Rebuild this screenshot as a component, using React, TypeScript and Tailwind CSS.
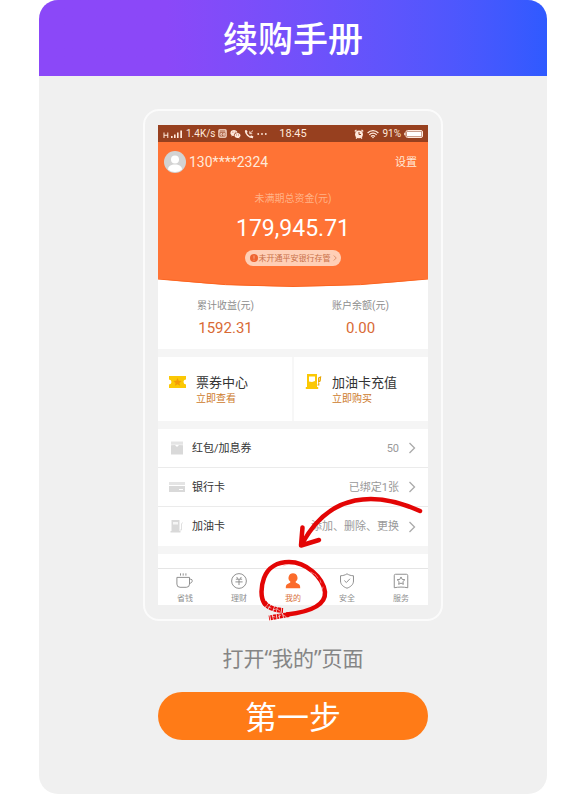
import type { ReactNode } from "react";

const cjk = "font-['Roboto','Noto_Sans_CJK_SC',sans-serif]";

function Chevron({ className }: { className: string }) {
  return (
    <svg viewBox="0 0 8 12" className={className} fill="none" stroke="currentColor" strokeWidth="1.3">
      <path d="M1.5 1 6.5 6 1.5 11" />
    </svg>
  );
}

function StatusBar() {
  return (
    <div className="flex h-[17px] items-center justify-between bg-[#97401f] px-[5px] text-[10px] leading-none text-[#ffe9dc]">
      <div className="flex flex-1 items-center gap-[3px]">
        <svg viewBox="0 0 20 10" className="h-[10px] w-5" fill="currentColor">
          <path d="M.5 3.5h1v2.2h2.800V3.500h1V9h-1V6.700H1.500V9h-1z" />
          <path d="M8 7h1.600v2H8zM11 5.500h1.600V9H11zM14 3.500h1.600V9H14zM17.300 1.500h1.700V9h-1.700z" />
        </svg>
        <span>1.4K/s</span>
        <svg viewBox="0 0 10 10" className="size-[9px]" fill="none" stroke="currentColor" strokeWidth="1.3">
          <rect x="1" y="1" width="8" height="8" rx="1" />
          <path d="M1 3.200h8M3 5h1.500v2H3zM6 5h1.500v2H6z" strokeWidth=".9" />
        </svg>
        <svg viewBox="0 0 11 10" className="h-[10px] w-[11px]" fill="currentColor">
          <path d="M4 1C1.900 1 .4 2.300.4 4c0 1 .5 1.800 1.300 2.300L1.400 7.500l1.300-.7 1.200.2C3.500 4.800 5 3.400 7.500 3.400 7.100 1.900 5.700 1 4 1z" />
          <path d="M7.500 4C5.800 4 4.500 5.100 4.500 6.500S5.800 9 7.500 9l.9-.1 1.100.6-.3-1c.8-.5 1.300-1.200 1.300-2C10.500 5.100 9.200 4 7.500 4z" />
          <path d="M2.500 3.200h.8M4.900 3.200h.8M6 6h.8M8.200 6H9" stroke="#97401f" strokeWidth=".8" />
        </svg>
        <svg viewBox="0 0 10 10" className="size-[10px]" fill="none" stroke="currentColor">
          <path d="M1.800 1.500C1.200 4.500 5 8.800 8.500 8.300" strokeWidth="1.500" />
          <path d="M1.500 1.500 3 3.500M6.500 7.200 9 8.500" strokeWidth="2" />
          <path d="M9 1.500 5.800 4.500M5.800 2.200v2.500h2.500" strokeWidth=".9" />
        </svg>
        <svg viewBox="0 0 10 4" className="h-1 w-[10px]" fill="currentColor">
          <circle cx="1.200" cy="2" r=".9" />
          <circle cx="5" cy="2" r=".9" />
          <circle cx="8.800" cy="2" r=".9" />
        </svg>
      </div>
      <span className="text-[11px]">18:45</span>
      <div className="flex flex-1 items-center justify-end gap-[3px]">
        <svg viewBox="0 0 10 10" className="size-[10px]">
          <circle cx="5" cy="5.300" r="3.900" fill="currentColor" />
          <path d="M.8 2.500 2.500.9M9.200 2.500 7.500.9M2 9.500l1-1M8 9.500l-1-1" stroke="currentColor" strokeWidth="1.300" />
          <path d="M5 3v2.500h2" fill="none" stroke="#97401f" strokeWidth="1" />
        </svg>
        <svg viewBox="0 0 12 10" className="h-[10px] w-3" fill="none" stroke="currentColor" strokeWidth="1.200">
          <path d="M.6 4C3.600.8 8.400.8 11.400 4M2.300 5.800c2-2.200 5.400-2.200 7.400 0M4 7.500c1.100-1.200 2.900-1.200 4 0" />
          <circle cx="6" cy="8.500" r=".8" fill="currentColor" stroke="none" />
        </svg>
        <span>91%</span>
        <svg viewBox="0 0 19 8" className="h-2 w-[19px]">
          <rect x="2" y=".5" width="16.500" height="7" rx="1.500" fill="none" stroke="currentColor" />
          <rect x="3" y="1.500" width="14.500" height="5" fill="#fff" />
          <path d="M.8 2.800v2.400" stroke="currentColor" strokeWidth="1.200" />
        </svg>
      </div>
    </div>
  );
}

function Balance() {
  return (
    <section className="relative z-0 flex h-[137px] flex-col bg-[#ff7335] px-[6px] pt-[9px] text-[#ffe9d9]">
      <svg viewBox="0 0 270 8" preserveAspectRatio="none" className="absolute top-full left-0 -z-10 h-2 w-full">
        <path d="M0 0Q135 15 270 0z" fill="#ff7335" />
        <path d="M0 0Q135 15 270 0" fill="none" stroke="#fb6420" strokeWidth="1" />
      </svg>
      <div className="flex items-center justify-between">
        <div className="flex items-center gap-[3px]">
          <svg viewBox="0 0 22 22" className="size-[22px]">
            <circle cx="11" cy="11" r="11" fill="#d3d3d3" />
            <circle cx="11" cy="8.500" r="4" fill="#fff" />
            <path d="M4 18.500C4 15 7 13.400 11 13.400s7 1.600 7 5.100a11 11 0 0 1-14 0z" fill="#fff" />
          </svg>
          <span className="text-[14px]">130****2324</span>
        </div>
        <button type="button" className="mr-[5px] pt-[3px] text-[11px]">设置</button>
      </div>
      <p className="mt-[18px] text-center text-[10px] leading-4 text-[#ffb287]">未满期总资金(元)</p>
      <p className="mt-2 text-center text-[23px] leading-7 text-white">179,945.71</p>
      <button
        type="button"
        className="mx-auto mt-[7px] flex h-4 w-24 items-center justify-center gap-px rounded-full bg-[#ffcfb6] text-[8px] text-[#c96f47]"
      >
        <svg viewBox="0 0 8 8" className="size-2 shrink-0">
          <circle cx="4" cy="4" r="4" fill="#ee6430" />
          <path d="M4 1.500v3.200M4 5.700v1" stroke="#ffb899" strokeWidth=".8" />
        </svg>
        <span className="pt-px whitespace-nowrap">未开通平安银行存管</span>
        <Chevron className="ml-px h-[6px] w-1 shrink-0" />
      </button>
    </section>
  );
}

function Figure({ label, value }: { label: string; value: string }) {
  return (
    <div className="flex-1 text-center">
      <p className="text-[10px] leading-4 text-[#8d8d8d]">{label}</p>
      <p className="mt-1 text-[15px] leading-5 text-[#d96a35]">{value}</p>
    </div>
  );
}

function Shortcut({ icon, title, action }: { icon: ReactNode; title: string; action: string }) {
  return (
    <div className="flex flex-1 items-start gap-2 pt-4 pl-[10px]">
      {icon}
      <div>
        <p className="text-[13px] leading-[19px] text-[#333]">{title}</p>
        <button type="button" className="block text-[10px] leading-[14px] text-[#cd7a2c]">{action}</button>
      </div>
    </div>
  );
}

function Row({ icon, label, value }: { icon: ReactNode; label: string; value: string }) {
  return (
    <button type="button" className="flex h-[39px] w-full items-center pr-3 pl-[11px] text-[11px]">
      {icon}
      <span className="ml-[7px] pt-[2px] text-[#333]">{label}</span>
      <span className="ml-auto pt-[2px] text-[#999]">{value}</span>
      <Chevron className="ml-[9px] h-3 w-2 text-[#aaa]" />
    </button>
  );
}

function Tab({ icon, label, active = false }: { icon: ReactNode; label: string; active?: boolean }) {
  return (
    <button
      type="button"
      className={`flex flex-1 flex-col items-center gap-[2px] pt-[3px] text-[8px] leading-3 ${active ? "text-[#d9713a]" : "text-[#8f8f8f]"}`}
    >
      {icon}
      <span className="pt-px">{label}</span>
    </button>
  );
}

const tabIcon = "h-5 w-5";

/* Hand-drawn ring around the active tab and the arrow leading to it. */
function Annotation() {
  return (
    <svg
      viewBox="0 0 270 480"
      className="pointer-events-none absolute inset-0 h-full w-full overflow-visible"
      fill="none"
      stroke="#e30505"
      strokeLinecap="round"
      strokeLinejoin="round"
    >
      <path d="M262 386C218 366 172 367 144 419" strokeWidth="4.500" />
      <path d="M144.500 402.500 143 420.500 161 415" strokeWidth="4.500" />
      <path
        d="M107 479C102 473 103 461 106 453C110 442 120 437 131 437C148 437 165 452 167 467C168 481 150 487 129 489.500"
        strokeWidth="4.500"
      />
      <path d="M106 477C109 482 116 485 125 485.500" strokeWidth="5" strokeLinecap="butt" strokeDasharray="4 .7 2.500 .6" />
      <path d="M131 489.500 111 493" strokeWidth="5" strokeLinecap="butt" strokeDasharray="3 .7 2 .8" />
      <g stroke="#f0f0f0" strokeWidth=".6">
        <path d="M110 482l3 1M115 485l3-1M119 484l3 2M114 491l3 1M120 492l3-2M125 490l2 1" />
        <path d="M153 447l3 2M157 449l3 4M162 455l1 3M165 462l-1 3M125 441l3-1" stroke="#ffb9b9" />
      </g>
    </svg>
  );
}

function PhoneScreen() {
  return (
    <div className="relative bg-[#f5f5f5]">
      <StatusBar />
      <Balance />
      <section className="flex bg-white pt-[19px] pb-[11px]">
        <Figure label="累计收益(元)" value="1592.31" />
        <Figure label="账户余额(元)" value="0.00" />
      </section>
      <section className="mt-2 flex h-16 divide-x-2 divide-[#f7f7f7] bg-white">
        <Shortcut
          title="票券中心"
          action="立即查看"
          icon={
            <svg viewBox="0 0 20 20" className="size-5">
              <path d="M1 3h17v3.500a2.500 2.500 0 0 0 0 5V15H1v-3.500a2.500 2.500 0 0 0 0-5z" fill="#fbc804" />
              <path d="m9.500 5 1.200 2.700 2.900.3-2.200 1.900.7 2.900-2.600-1.500-2.600 1.500.7-2.900L5.400 8l2.900-.3z" fill="#f49b08" />
            </svg>
          }
        />
        <Shortcut
          title="加油卡充值"
          action="立即购买"
          icon={
            <svg viewBox="0 0 20 20" className="size-5">
              <path d="M3 1h10v13h1.200v2H1.800v-2H3z" fill="#fbc804" />
              <path d="M5 3.500h6V8l-3 1-3-.5z" fill="#fff" />
              <path d="M13.500 12h1.300V5.500M14.600 5l2-1-.4 4-1.600 1z" fill="none" stroke="#e8a500" strokeWidth="1.100" />
            </svg>
          }
        />
      </section>
      <section className="mt-2 divide-y divide-[#ebebeb] bg-white">
        <Row
          label="红包/加息券"
          value="50"
          icon={
            <svg viewBox="0 0 16 16" className="size-4">
              <path d="M2 1.500h12v3.200H2z" fill="#e4e4e4" />
              <path d="M2 5.200 6 5l2 2 2-2 4 .2v9.300H2z" fill="#d9d9d9" />
            </svg>
          }
        />
        <Row
          label="银行卡"
          value="已绑定1张"
          icon={
            <svg viewBox="0 0 16 16" className="size-4">
              <path d="M0 3h16v3H0z" fill="#e4e4e4" />
              <path d="M0 7h16v6H0z" fill="#d9d9d9" />
              <path d="M10 10.500h4" stroke="#fff" />
            </svg>
          }
        />
        <Row
          label="加油卡"
          value="添加、删除、更换"
          icon={
            <svg viewBox="0 0 16 16" className="size-4">
              <path d="M2.500 1h8v11h1v1.500h-10V12h1z" fill="#d9d9d9" />
              <path d="M4 3h5v2.500H4z" fill="#f5f5f5" />
              <path d="M11 11h1.500V5l1-1.500" fill="none" stroke="#e0e0e0" />
            </svg>
          }
        />
      </section>
      <div className="mt-2 h-[14px] bg-white" />
      <nav className="flex h-[37px] border-t border-[#e5e5e5] bg-white">
        <Tab
          label="省钱"
          icon={
            <svg viewBox="0 0 20 20" className={tabIcon} fill="none" stroke="#858585" strokeWidth="1">
              <path d="M1 6h14v7.500a3.500 3.500 0 0 1-3.500 3.500h-7A3.500 3.500 0 0 1 1 13.500zM15 8h1.500a1.700 1.700 0 0 1 1.500 1.800c0 1.600-1.200 2.700-3 2.700M5 1.500v2.500M8 1.500v2.500M11 1.500v2.500" />
            </svg>
          }
        />
        <Tab
          label="理财"
          icon={
            <svg viewBox="0 0 20 20" className={tabIcon} fill="none" stroke="#858585" strokeWidth="1">
              <circle cx="10" cy="10" r="8.200" />
              <path d="M7.500 5.500 8.500 7.500M12.500 5.500 11.500 7.500M6.500 8h7M6 11h8M10 8v6.500" />
            </svg>
          }
        />
        <Tab
          active
          label="我的"
          icon={
            <svg viewBox="0 0 20 20" className={tabIcon} fill="#fb6b2b">
              <path d="M10 1.500a5 5 0 0 0-3 9v1.300L3.500 13.500C2.500 14 2 15 2 18h16c0-3-.5-4-1.500-4.500L13 11.800v-1.300a5 5 0 0 0-3-9z" />
            </svg>
          }
        />
        <Tab
          label="安全"
          icon={
            <svg viewBox="0 0 20 20" className={tabIcon} fill="none" stroke="#858585" strokeWidth="1">
              <path d="M10 2c2.200 1.500 4.500 2.100 7.200 2.200V10c0 3.800-3 6.500-7.200 8-4.200-1.500-7.200-4.200-7.200-8V4.200C5.500 4.100 7.800 3.500 10 2z" />
              <path d="m7 9.500 2.300 2.200L13.300 7.500" />
            </svg>
          }
        />
        <Tab
          label="服务"
          icon={
            <svg viewBox="0 0 20 20" className={tabIcon} fill="none" stroke="#858585" strokeWidth="1">
              <path d="M4 2.500h12a1.500 1.500 0 0 1 1.500 1.500v13.500c-5-1-10-1-15 0V4A1.500 1.500 0 0 1 4 2.500z" />
              <path d="m10 5.500 1.300 2.700 3 .4-2.200 2.100.5 3-2.600-1.400-2.600 1.400.5-3-2.200-2.100 3-.4z" />
            </svg>
          }
        />
      </nav>
      <Annotation />
    </div>
  );
}

export default function App() {
  return (
    <div className={`bg-white pr-[17px] pl-[39px] ${cjk}`} lang="zh-CN">
      <main className="overflow-hidden rounded-[19px] bg-[#f0f0f0] pb-[54px]">
        <header className="flex h-[76px] items-center justify-center bg-linear-to-r from-[#8b48f8] from-25% to-[#2f5aff] pt-1">
          <h1 className="text-[35px] leading-none font-medium text-white">续购手册</h1>
        </header>
        <div className="mx-auto mt-[33px] max-w-[300px] rounded-2xl border-2 border-[#fbfbfb] px-[13px] py-[14px]">
          <PhoneScreen />
        </div>
        <p className="mt-[21px] text-center font-['Noto_Sans','Noto_Sans_CJK_SC',sans-serif] text-[21px] leading-8 text-[#858585]">
          打开“我的”页面
        </p>
        <button
          type="button"
          className="mx-auto mt-[18px] flex h-12 w-full max-w-[270px] items-center justify-center rounded-full bg-[#ff7b17] pt-1 text-[32px] leading-none text-white"
        >
          第一步
        </button>
      </main>
    </div>
  );
}
